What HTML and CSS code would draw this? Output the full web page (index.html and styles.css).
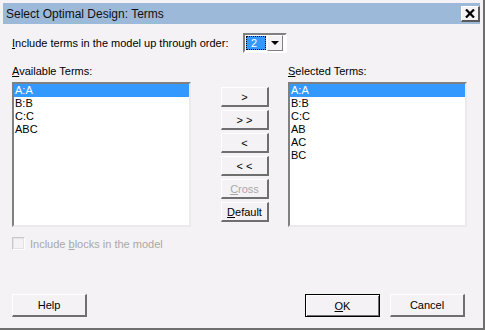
FILE: index.html
```html
<!DOCTYPE html>
<html>
<head>
<meta charset=utf-8>
<title>Select Optimal Design: Terms</title>
<link rel="stylesheet" href="styles.css">
</head>
<body>
<div class="window">
  <div class="titlebar">
    <span class="title">Select Optimal Design: Terms</span>
    <span class="close"><svg width="10" height="9" viewBox="0 0 10 9"><path d="M1 0.5 L9 8.5 M9 0.5 L1 8.5" stroke="#000" stroke-width="2.2" fill="none"/></svg></span>
  </div>
  <div class="content">
    <div class="orderrow">
      <label><u>I</u>nclude terms in the model up through order:</label>
      <div class="combo">
        <span class="combo-value"><span class="focus">2</span></span>
        <span class="combo-btn"><span class="arrow"></span></span>
      </div>
    </div>

    <div class="terms">
      <div class="col">
        <div class="caption"><u>A</u>vailable Terms:</div>
        <div class="listbox">
          <div class="item sel">A:A</div>
          <div class="item">B:B</div>
          <div class="item">C:C</div>
          <div class="item">ABC</div>
        </div>
      </div>
      <div class="movers">
        <div class="btn small">&gt;</div>
        <div class="btn small">&gt; &gt;</div>
        <div class="btn small">&lt;</div>
        <div class="btn small">&lt; &lt;</div>
        <div class="btn small disabled"><u>C</u>ross</div>
        <div class="btn small"><u>D</u>efault</div>
      </div>
      <div class="col">
        <div class="caption"><u>S</u>elected Terms:</div>
        <div class="listbox">
          <div class="item sel">A:A</div>
          <div class="item">B:B</div>
          <div class="item">C:C</div>
          <div class="item">AB</div>
          <div class="item">AC</div>
          <div class="item">BC</div>
        </div>
      </div>
    </div>

    <div class="checkrow">
      <span class="checkbox"></span>
      <span class="checklabel">Include <u>b</u>locks in the model</span>
    </div>

    <div class="footer">
      <div class="btn wide">Help</div>
      <div class="spacer"></div>
      <div class="btn wide default"><u>O</u>K</div>
      <div class="btn wide">Cancel</div>
    </div>
  </div>
</div>
</body>
</html>
```

FILE: styles.css
```css
html, body
{
	margin:0;
	padding:0;
	background-color:#F5F2F5;
	font-family: "Liberation Sans", Arial, sans-serif;
	font-size:11px;
	color:black;
}
u { text-decoration:underline; text-underline-offset:1px; }

.window
{
	width:485px;
	height:330px;
	box-sizing:border-box;
	padding:3px 3px 0 3px;
	background-color:#F5F2F5;
	border-right:2px solid #6F6F6F;
	border-bottom:2px solid #6F6F6F;
	display:flex;
	flex-direction:column;
}
.titlebar
{
	height:21px;
	background-color:#9DB9D9;
	display:flex;
	align-items:center;
	justify-content:space-between;
	padding:0 0 0 3px;
}
.title
{
	font-size:12px;
	color:#111;
}
.close
{
	width:16px;
	height:13px;
	background-color:#F5F2F5;
	border-top:1px solid #fff;
	border-left:1px solid #fff;
	border-right:2px solid #5a5a5a;
	border-bottom:2px solid #5a5a5a;
	display:flex;
	align-items:center;
	justify-content:center;
}

.content
{
	flex:1;
	padding:0 0 0 9px;
	display:flex;
	flex-direction:column;
}
.orderrow
{
	display:flex;
	align-items:center;
	margin-top:9px;
	height:20px;
}
.orderrow label { width:231px; }
.combo
{
	width:40px;
	height:16px;
	display:flex;
	border-top:2px solid #808080;
	border-left:2px solid #808080;
	border-right:2px solid #fff;
	border-bottom:2px solid #fff;
	background:#fff;
}
.combo-value
{
	width:22px;
	padding:1px;
	box-sizing:border-box;
}
.focus
{
	display:block;
	height:12px;
	background-color:#3399FF;
	color:#fff;
	border:1px dotted #E08000;
	outline:1px dotted #000;
	outline-offset:-1px;
	line-height:12px;
	padding-left:4px;
}
.combo-btn
{
	width:16px;
	box-sizing:border-box;
	background:#F5F2F5;
	border-top:1px solid #fff;
	border-left:1px solid #fff;
	border-right:1px solid #808080;
	border-bottom:1px solid #808080;
	display:flex;
	align-items:center;
	justify-content:center;
}
.arrow
{
	width:0;
	height:0;
	border-left:4px solid transparent;
	border-right:4px solid transparent;
	border-top:4px solid #000;
}

.terms
{
	display:flex;
	margin-top:12px;
}
.col { width:179px; }
.caption
{
	height:13px;
	line-height:13px;
	margin-bottom:4px;
}
.listbox
{
	height:145px;
	box-sizing:border-box;
	background:#fff;
	border-top:2px solid #808080;
	border-left:2px solid #808080;
	border-right:2px solid #EDEAED;
	border-bottom:2px solid #EDEAED;
	padding:0;
}
.item
{
	height:13px;
	line-height:13px;
	padding-left:1px;
}
.item.sel
{
	background-color:#3399FF;
	color:#fff;
}

.movers
{
	width:48px;
	margin:0 19px 0 30px;
	padding-top:22px;
	display:flex;
	flex-direction:column;
	gap:3px;
}
.btn
{
	box-sizing:border-box;
	background:#F5F2F5;
	border-top:1px solid #fff;
	border-left:1px solid #fff;
	border-right:2px solid #6F6F6F;
	border-bottom:2px solid #6F6F6F;
	text-align:center;
	display:flex;
	align-items:center;
	justify-content:center;
}
.btn.small { height:20px; width:48px; }
.btn.disabled { color:#A8A8A8; }

.checkrow
{
	display:flex;
	align-items:center;
	margin-top:10px;
	height:13px;
}
.checkbox
{
	width:13px;
	height:13px;
	box-sizing:border-box;
	border-top:1px solid #C8C8C8;
	border-left:1px solid #C8C8C8;
	border-right:1px solid #fff;
	border-bottom:1px solid #fff;
	outline:1px solid #E6E3E6;
	outline-offset:-2px;
	margin-right:5px;
}
.checklabel { color:#A8A8A8; }

.footer
{
	display:flex;
	margin-top:44px;
	padding-right:15px;
}
.spacer { flex:1; }
.btn.wide { width:75px; height:23px; }
.btn.default
{
	border:1px solid #000;
	box-shadow:inset 1px 1px 0 #fff, inset -1px -1px 0 #6F6F6F;
	margin-right:10px;
}
```
